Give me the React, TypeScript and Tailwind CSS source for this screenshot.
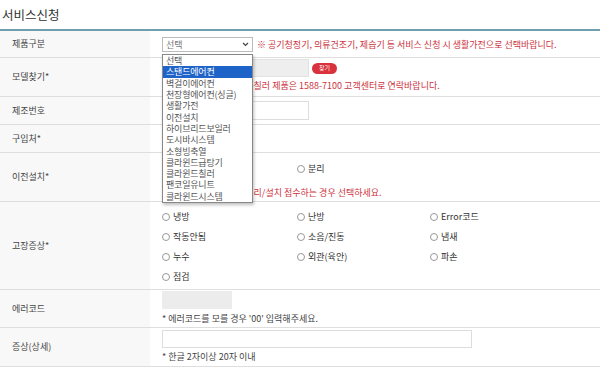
import React from "react";

const font = { fontFamily: '"Noto Sans CJK KR", "Noto Sans", sans-serif' };

function Radio({ label }: { label: string }) {
  return (
    <div className="flex items-center gap-[3px] h-[11px] text-[9px] text-[#333] leading-none">
      <span className="w-[8px] h-[8px] rounded-full border border-[#999] bg-white inline-block shrink-0" />
      <span>{label}</span>
    </div>
  );
}

function Row({
  label,
  h,
  center = true,
  pt = "",
  children,
}: {
  label: string;
  h: string;
  center?: boolean;
  pt?: string;
  children?: React.ReactNode;
}) {
  return (
    <div className={`flex border-b border-[#dedede] ${h}`}>
      <div className="w-[150px] shrink-0 bg-[#f8f8f8] flex items-center pl-[12px] text-[9px] text-[#444]">
        {label}
      </div>
      <div className={`flex-1 pl-[12px] flex flex-col ${center ? "justify-center" : "justify-start"} ${pt}`}>{children}</div>
    </div>
  );
}

export default function App() {
  const options = [
    "선택",
    "스탠드에어컨",
    "벽걸이에어컨",
    "천장형에어컨(싱글)",
    "생활가전",
    "이전설치",
    "하이브리드보일러",
    "도시바시스템",
    "소형빙축열",
    "클라윈드급탕기",
    "클라윈드칠러",
    "팬코일유니트",
    "클라윈드시스템",
  ];
  const red = "text-[9px] text-[#cc3340] whitespace-nowrap leading-none";
  return (
    <div className="relative w-[600px] h-[379px] bg-white overflow-hidden" style={font}>
      <div className="h-[29px] pl-[2px] pt-[2px] flex items-center text-[12.5px] text-[#333]">서비스신청</div>
      <div className="border-t-2 border-[#6f9fae]">
        <Row label="제품구분" h="h-[27px]">
          <div className="flex items-center gap-[4px]">
            <div className="w-[91px] h-[15px] border border-[#bbb] flex items-center justify-between px-[3px] text-[9px] text-[#777] leading-none">
              <span>선택</span>
              <svg width="7" height="5" viewBox="0 0 7 5">
                <path d="M1 1l2.5 2.5L6 1" stroke="#444" strokeWidth="1.2" fill="none" />
              </svg>
            </div>
            <span className={red}>※ 공기청정기, 의류건조기, 제습기 등 서비스 신청 시 생활가전으로 선택바랍니다.</span>
          </div>
        </Row>
        <Row label="모델찾기*" h="h-[39px]" center={false} pt="pt-[1px]">
          <div className="flex items-center gap-[3px]">
            <div className="w-[147px] h-[18px] bg-[#eee] border border-[#e2e2e2]" />
            <span className="w-[25px] h-[11px] rounded-full bg-[#d9323c] text-white text-[6px] flex items-center justify-center leading-none">
              찾기
            </span>
          </div>
          <div className={`mt-[4px] ${red}`}>※ 모델명 검색이 안되는 칠러 제품은 1588-7100 고객센터로 연락바랍니다.</div>
        </Row>
        <Row label="제조번호" h="h-[28px]">
          <div className="w-[147px] h-[19px] border border-[#ddd] bg-white" />
        </Row>
        <Row label="구입처*" h="h-[28px]" />
        <Row label="이전설치*" h="h-[49px]" center={false} pt="pt-[10px]">
          <div className="flex items-center">
            <div className="w-[135px]">
              <Radio label="일체" />
            </div>
            <Radio label="분리" />
          </div>
          <div className={`mt-[14px] ${red}`}>※ 이전설치 시 제품을 분리/설치 접수하는 경우 선택하세요.</div>
        </Row>
        <Row label="고장증상*" h="h-[88px]" center={false} pt="pt-[9px]">
          <div className="grid grid-cols-[135px_133px_100px] gap-y-[9px]">
            <Radio label="냉방" />
            <Radio label="난방" />
            <Radio label="Error코드" />
            <Radio label="작동안됨" />
            <Radio label="소음/진동" />
            <Radio label="냄새" />
            <Radio label="누수" />
            <Radio label="외관(육안)" />
            <Radio label="파손" />
            <Radio label="점검" />
          </div>
        </Row>
        <Row label="에러코드" h="h-[38px]" center={false} pt="pt-[1px]">
          <div className="w-[70px] h-[18px] bg-[#ececec]" />
          <div className="mt-[5px] text-[9px] text-[#444] leading-none">* 에러코드를 모를 경우 '00' 입력해주세요.</div>
        </Row>
        <Row label="증상(상세)" h="h-[39px]" center={false} pt="pt-[2px]">
          <div className="w-[310px] h-[18px] border border-[#ddd] bg-white" />
          <div className="mt-[4px] text-[9px] text-[#444] leading-none">* 한글 2자이상 20자 이내</div>
        </Row>
      </div>
      <div className="absolute left-[162px] top-[54px] w-[91px] h-[149px] bg-white border border-[#888] shadow-[1px_2px_3px_rgba(0,0,0,0.25)] flex flex-col">
        {options.map((o, i) => (
          <div
            key={o}
            className={`h-[11.3px] flex items-center pl-[3px] text-[9px] tracking-[-0.2px] leading-none whitespace-nowrap ${
              i === 1 ? "bg-[#1e64c8] text-white" : "text-[#555]"
            }`}
          >
            {o}
          </div>
        ))}
      </div>
    </div>
  );
}
